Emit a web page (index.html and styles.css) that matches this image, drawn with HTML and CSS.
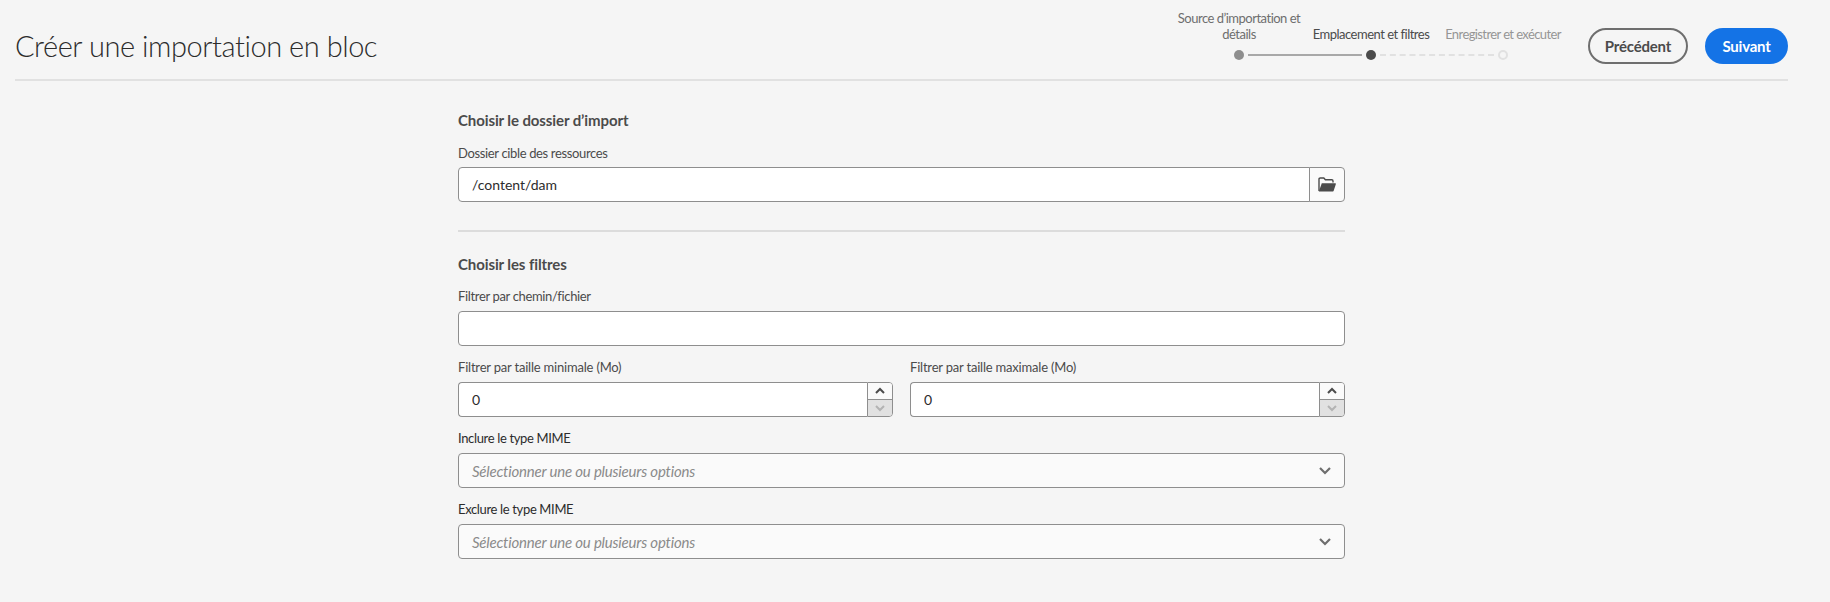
FILE: index.html
```html
<!DOCTYPE html>
<html lang="fr">
<head>
  <meta charset="UTF-8" />
  <title>Créer une importation en bloc</title>
  <link rel="stylesheet" href="styles.css">
</head>
<body>
  <header class="topbar">
    <h1 class="title">Créer une importation en bloc</h1>
    <div class="stepper">
      <div class="step-labels">
        <span class="step-label done">Source d’importation et détails</span>
        <span class="step-label current">Emplacement et filtres</span>
        <span class="step-label todo">Enregistrer et exécuter</span>
      </div>
      <div class="step-track">
        <span class="dot dot-done"></span>
        <span class="line line-done"></span>
        <span class="dot dot-current"></span>
        <span class="line line-todo"></span>
        <span class="dot dot-todo"></span>
      </div>
    </div>
    <button class="btn btn-outline">Précédent</button>
    <button class="btn btn-primary">Suivant</button>
  </header>

  <main class="form">
    <h2 class="section-title">Choisir le dossier d’import</h2>
    <label class="label">Dossier cible des ressources</label>
    <div class="field-row">
      <input class="input input-joined" type="text" value="/content/dam" />
      <button class="browse">
        <svg width="18" height="15" viewBox="0 0 18 15">
          <path d="M1 14V2.2C1 1.5 1.5 1 2.2 1h3.6l1.6 1.8h6.4c.7 0 1.2.5 1.2 1.2v1.4" fill="none" stroke="#4b4b4b" stroke-width="1.4"/>
          <path d="M3.8 6.2H17.4c.4 0 .6.3.5.7L15.6 14c-.1.3-.4.5-.7.5H.8z" fill="#4b4b4b"/>
        </svg>
      </button>
    </div>

    <hr class="divider" />

    <h2 class="section-title">Choisir les filtres</h2>
    <label class="label label-first">Filtrer par chemin/fichier</label>
    <input class="input" type="text" />

    <div class="two-cols">
      <div>
        <label class="label">Filtrer par taille minimale (Mo)</label>
        <div class="number">
          <input class="input input-number" type="text" value="0" />
          <div class="spinner">
            <span class="spin spin-up">
              <svg width="12" height="8" viewBox="0 0 12 8"><path d="M2 6l4-4 4 4" fill="none" stroke="#4b4b4b" stroke-width="2"/></svg>
            </span>
            <span class="spin spin-down">
              <svg width="12" height="8" viewBox="0 0 12 8"><path d="M2 2l4 4 4-4" fill="none" stroke="#b3b3b3" stroke-width="2"/></svg>
            </span>
          </div>
        </div>
      </div>
      <div>
        <label class="label">Filtrer par taille maximale (Mo)</label>
        <div class="number">
          <input class="input input-number" type="text" value="0" />
          <div class="spinner">
            <span class="spin spin-up">
              <svg width="12" height="8" viewBox="0 0 12 8"><path d="M2 6l4-4 4 4" fill="none" stroke="#4b4b4b" stroke-width="2"/></svg>
            </span>
            <span class="spin spin-down">
              <svg width="12" height="8" viewBox="0 0 12 8"><path d="M2 2l4 4 4-4" fill="none" stroke="#b3b3b3" stroke-width="2"/></svg>
            </span>
          </div>
        </div>
      </div>
    </div>

    <label class="label label-dark">Inclure le type MIME</label>
    <div class="select">
      <span class="placeholder">Sélectionner une ou plusieurs options</span>
      <svg width="14" height="9" viewBox="0 0 14 9"><path d="M2 2l5 5 5-5" fill="none" stroke="#6e6e6e" stroke-width="2.2"/></svg>
    </div>

    <label class="label label-dark">Exclure le type MIME</label>
    <div class="select">
      <span class="placeholder">Sélectionner une ou plusieurs options</span>
      <svg width="14" height="9" viewBox="0 0 14 9"><path d="M2 2l5 5 5-5" fill="none" stroke="#6e6e6e" stroke-width="2.2"/></svg>
    </div>
  </main>
</body>
</html>
```

FILE: styles.css
```css
* {
  box-sizing: border-box;
  margin: 0;
  padding: 0;
}

body {
  font-family: 'Lato', sans-serif;
  background-color: #f5f5f5;
  color: #4b4b4b;
  padding: 0 42px 0 15px;
  min-height: 100vh;
}

.topbar {
  display: flex;
  align-items: flex-start;
  height: 81px;
  border-bottom: 2px solid #e1e1e1;
}

.title {
  font-size: 29px;
  font-weight: 300;
  letter-spacing: -0.45px;
  line-height: 36px;
  color: #2c2c2c;
  margin-top: 28px;
  margin-right: auto;
}

.stepper {
  width: 396px;
  margin-top: 10px;
  margin-right: 19px;
}

.step-labels {
  display: grid;
  grid-template-columns: repeat(3, 132px);
  align-items: end;
  height: 32px;
  font-size: 13px;
  letter-spacing: -0.5px;
  line-height: 16px;
  text-align: center;
}

.step-label.done {
  color: #6e6e6e;
  padding: 0 3px;
}

.step-label.current {
  color: #4b4b4b;
}

.step-label.todo {
  color: #959595;
  letter-spacing: -0.6px;
}

.step-track {
  display: flex;
  align-items: center;
  height: 10px;
  margin-top: 8px;
  padding: 0 61px;
}

.dot {
  width: 10px;
  height: 10px;
  border-radius: 50%;
  flex-shrink: 0;
}

.dot-done {
  background: #8e8e8e;
}

.dot-current {
  background: #4b4b4b;
}

.dot-todo {
  border: 2px solid #e1e1e1;
}

.line {
  flex: 1;
  margin: 0 4px;
  height: 0;
}

.line-done {
  border-top: 2px solid #a8a8a8;
}

.line-todo {
  border-top: 2px dashed #e1e1e1;
}

.btn {
  height: 36px;
  margin-top: 28px;
  border-radius: 18px;
  font-family: inherit;
  font-size: 15px;
  font-weight: 700;
  letter-spacing: -0.2px;
  cursor: pointer;
}

.btn-outline {
  width: 100px;
  margin-right: 17px;
  background: transparent;
  border: 2px solid #6e6e6e;
  color: #4b4b4b;
}

.btn-primary {
  width: 83px;
  background: #1473e6;
  border: none;
  color: #fff;
}

.form {
  width: 887px;
  margin: 0 auto;
  padding-top: 29px;
}

.section-title {
  font-size: 15px;
  font-weight: 700;
  letter-spacing: -0.1px;
  line-height: 20px;
  color: #4b4b4b;
  margin-bottom: 13px;
}

.label {
  display: block;
  font-size: 13px;
  letter-spacing: -0.35px;
  line-height: 20px;
  color: #4b4b4b;
  margin-bottom: 4px;
}

.label-first {
  margin-top: -1px;
  margin-bottom: 5px;
}

.label-dark {
  color: #2c2c2c;
  margin-top: 11px;
  margin-bottom: 5px;
}

.input {
  display: block;
  width: 100%;
  height: 35px;
  padding: 0 13px;
  background: #fff;
  border: 1px solid #8e8e8e;
  border-radius: 4px;
  font-family: inherit;
  font-size: 14px;
  color: #2c2c2c;
}

.field-row {
  display: flex;
}

.input-joined {
  flex: 1;
  border-radius: 4px 0 0 4px;
}

.browse {
  display: flex;
  align-items: center;
  justify-content: center;
  width: 36px;
  height: 35px;
  margin-left: -1px;
  background: #fafafa;
  border: 1px solid #8e8e8e;
  border-radius: 0 4px 4px 0;
}

.divider {
  height: 2px;
  margin: 28px 0 22px;
  background: #dcdcdc;
  border: none;
}

.two-cols {
  display: grid;
  grid-template-columns: 435px 435px;
  gap: 17px;
  margin-top: 11px;
}

.two-cols .label {
  letter-spacing: -0.2px;
  margin-bottom: 5px;
}

.number {
  display: flex;
}

.input-number {
  flex: 1;
  border-radius: 4px 0 0 4px;
  border-right: none;
}

.spinner {
  display: flex;
  flex-direction: column;
  width: 26px;
  height: 35px;
  border: 1px solid #8e8e8e;
  border-radius: 0 4px 4px 0;
  overflow: hidden;
}

.spin {
  flex: 1;
  display: flex;
  align-items: center;
  justify-content: center;
}

.spin-up {
  background: #fafafa;
  border-bottom: 1px solid #8e8e8e;
}

.spin-down {
  background: #e1e1e1;
}

.select {
  display: flex;
  align-items: center;
  justify-content: space-between;
  height: 35px;
  padding: 0 12px 0 13px;
  background: #fafafa;
  border: 1px solid #8e8e8e;
  border-radius: 4px;
}

.placeholder {
  font-size: 15px;
  font-style: italic;
  letter-spacing: -0.2px;
  color: #8a8a8a;
}
```
